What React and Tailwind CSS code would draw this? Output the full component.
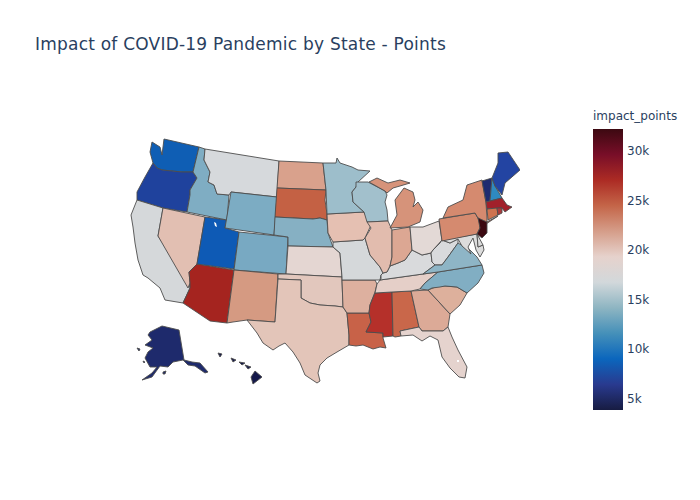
// App.jsx - impact points choropleth
import React from "react";

const states = [
  { id: "WA", fill: "#0f5eb4", pts: "152,142 160,147 162,155 164,139 199,147 193,172 182,172 162,170 157,168 153,163 150,152" },
  { id: "OR", fill: "#1f429d", pts: "153,163 157,168 162,170 182,172 193,172 197,178 190,190 190,195 187,212 163,208 137,200 137,192 145,177" },
  { id: "CA", fill: "#d5d8da", pts: "137,200 163,208 158,236 188,280 190,288 183,303 165,300 160,288 148,278 143,275 138,260 135,243 133,227 131,215 135,205" },
  { id: "NV", fill: "#e2bfb2", pts: "163,208 205,217 197,264 189,272 190,283 188,288 158,236" },
  { id: "AZ", fill: "#a5241f", pts: "197,264 234,270 227,323 210,321 183,303 190,288 190,283 189,272" },
  { id: "UT", fill: "#0e5ab5", pts: "205,217 227,220 225,228 239,232 234,269 197,264" },
  { id: "ID", fill: "#7fadc3", pts: "199,147 205,149 204,160 210,172 208,182 214,185 217,194 229,195 227,220 187,212 190,195 190,190 197,178 193,172" },
  { id: "MT", fill: "#d6d9dc", pts: "205,149 279,161 277,197 231,192 229,195 217,194 214,185 208,182 210,172 204,160" },
  { id: "WY", fill: "#7cacc3", pts: "231,192 277,197 274,235 225,228" },
  { id: "CO", fill: "#78a9c2", pts: "239,232 288,237 286,274 234,270" },
  { id: "NM", fill: "#d59a82", pts: "234,270 278,274 275,322 247,320 233,322 227,323" },
  { id: "ND", fill: "#d9a18c", pts: "279,161 323,163 326,190 277,188" },
  { id: "SD", fill: "#c46144", pts: "277,188 326,190 325,200 327,214 327,220 320,218 313,219 275,217" },
  { id: "NE", fill: "#86b0c3", pts: "275,217 313,219 320,218 327,220 328,233 333,247 288,246 288,237 274,235" },
  { id: "KS", fill: "#e4d6d2", pts: "288,246 333,247 340,253 342,277 286,274" },
  { id: "OK", fill: "#e2c7bd", pts: "278,274 286,274 342,277 342,280 343,307 335,306 320,305 310,303 301,298 301,280 278,279" },
  { id: "TX", fill: "#e3c5b9", pts: "278,279 301,280 301,298 310,303 320,305 335,306 343,307 347,313 349,335 349,345 337,352 327,358 320,365 318,373 320,381 317,383 305,375 300,363 293,352 285,343 279,346 273,350 263,343 257,333 247,320 275,322" },
  { id: "LA", fill: "#c86248", pts: "347,313 369,313 371,322 366,332 383,333 383,338 386,348 380,347 373,349 363,345 356,346 349,345 349,335" },
  { id: "AR", fill: "#ddb09f", pts: "342,280 375,280 377,284 375,292 370,305 369,313 347,313 343,307" },
  { id: "MS", fill: "#b5302a", pts: "375,293 392,292 393,336 383,337 383,333 366,332 371,322 369,313 370,305" },
  { id: "AL", fill: "#c9674a", pts: "392,292 411,291 419,327 400,331 401,336 395,337 393,336" },
  { id: "GA", fill: "#dcaa97", pts: "411,291 428,290 450,314 448,327 443,331 422,331 419,327" },
  { id: "SC", fill: "#ddb09c", pts: "428,290 438,286 445,286 457,287 467,293 460,305 450,314" },
  { id: "FL", fill: "#e5d3ce", pts: "400,331 419,327 422,331 443,331 448,327 452,337 458,350 467,367 465,378 459,377 450,368 442,357 438,340 430,336 422,341 413,335 401,336" },
  { id: "TN", fill: "#e5cfc8", pts: "380,280 423,274 438,272 425,283 420,289 411,291 392,292 375,293 377,284" },
  { id: "NC", fill: "#81aec3", pts: "438,272 482,265 484,273 478,283 467,293 457,287 445,286 440,287 432,288 428,290 420,289 425,283" },
  { id: "MO", fill: "#d5d8da", pts: "333,242 363,240 365,238 370,255 375,261 380,267 383,273 381,275 380,280 375,280 342,280 342,277 340,253 333,247" },
  { id: "KY", fill: "#d9dadc", pts: "381,279 381,275 383,273 387,272 390,266 398,263 405,260 412,250 422,255 431,253 432,262 435,265 423,274 380,280" },
  { id: "IA", fill: "#e5c0b2", pts: "327,214 364,212 371,225 365,238 363,240 333,242 328,233" },
  { id: "MN", fill: "#9dbecb", pts: "323,163 336,163 337,158 340,163 352,167 358,170 370,171 358,182 356,187 352,192 353,202 364,212 327,214 326,190" },
  { id: "WI", fill: "#a2c0cc", pts: "356,182 368,182 385,191 387,195 385,202 387,210 388,221 367,222 364,212 353,202 352,192 356,187" },
  { id: "IL", fill: "#e2bcae", pts: "367,222 388,221 392,230 392,257 390,266 387,272 383,273 380,267 370,255 365,238 371,228" },
  { id: "IN", fill: "#dca793", pts: "392,230 410,227 412,250 405,260 398,263 390,266 392,257" },
  { id: "OH", fill: "#e3d9d6", pts: "410,227 423,227 439,221 442,240 433,250 431,253 422,255 412,250" },
  { id: "MI", fill: "#d6937a", pts: "395,200 404,188 413,192 415,200 413,207 418,202 423,210 420,222 408,227 390,228 397,215" },
  { id: "MIU", fill: "#d6937a", pts: "369,182 377,178 388,183 400,180 410,183 400,186 393,188 387,193 385,191" },
  { id: "WV", fill: "#d9dadc", pts: "442,240 450,243 458,239 458,243 453,250 448,257 442,265 435,265 432,262 431,253 433,250 440,243" },
  { id: "VA", fill: "#8eb5c6", pts: "423,274 435,265 442,265 448,257 453,250 458,243 470,250 477,257 482,265 438,272" },
  { id: "MD", fill: "#dcdcdc", pts: "442,240 477,234 478,247 483,245 484,250 480,257 476,250 473,238 468,247 471,254 462,246 458,239 450,243" },
  { id: "DE", fill: "#dcdcdc", pts: "477,234 483,245 478,247" },
  { id: "PA", fill: "#d58a6f", pts: "439,219 475,213 480,222 480,228 477,234 442,241" },
  { id: "NY", fill: "#d58a6f", pts: "443,218 448,207 463,200 467,185 482,180 486,203 487,218 487,222 498,216 486,224 478,218 475,213" },
  { id: "NJ", fill: "#3c0911", pts: "478,218 487,222 487,233 482,238 477,234 480,228" },
  { id: "VT", fill: "#1f2b70", pts: "482,181 492,178 490,201 486,202" },
  { id: "NH", fill: "#2e8ac0", pts: "492,178 495,186 502,198 490,201" },
  { id: "ME", fill: "#2344a2", pts: "498,153 508,152 520,170 505,183 502,195 495,186 492,178 498,163" },
  { id: "MA", fill: "#a1202b", pts: "486,202 502,198 507,205 512,207 505,212 502,208 487,209" },
  { id: "CT", fill: "#ce7350", pts: "487,209 497,208 498,215 488,220" },
  { id: "RI", fill: "#ac3a3a", pts: "497,208 502,208 502,213 498,215" },
  { id: "AK", fill: "#1e2a6c", pts: "150,332 162,326 179,330 184,360 192,362 200,363 208,372 205,373 195,366 188,365 183,360 173,362 168,367 160,366 152,377 142,380 152,373 157,367 150,367 145,358 148,352 153,348 145,345 152,340 148,335" },
  { id: "AK2", fill: "#1e2a6c", pts: "137,348 140,349 139,351" },
  { id: "AK3", fill: "#1e2a6c", pts: "143,361 145,362 144,363" },
  { id: "AK4", fill: "#1e2a6c", pts: "163,372 166,371 165,374 163,374" },
  { id: "HI1", fill: "#14184a", pts: "218,353 222,354 220,357" },
  { id: "HI2", fill: "#14184a", pts: "231,358 236,360 233,362" },
  { id: "HI3", fill: "#14184a", pts: "239,362 245,363 242,365" },
  { id: "HI4", fill: "#14184a", pts: "245,365 251,367 248,369" },
  { id: "HI5", fill: "#14184a", pts: "255,371 262,377 253,384 251,377" },
];

const ticks = ["30k", "25k", "20k", "15k", "10k", "5k"];

export default function App() {
  return (
    <div className="w-[700px] h-[500px] bg-white flex flex-col font-['DejaVu_Sans',sans-serif] text-[#2a3f5f]">
      <div className="pl-[35px] pt-[32px] text-[17px] leading-[24px] tracking-[0.22px]">
        Impact of COVID-19 Pandemic by State - Points
      </div>

      <div className="flex pl-[120px] pt-[52px]">
        {/* map */}
        <svg viewBox="120 130 400 265" className="w-[400px] h-[265px] mt-[22px] shrink-0">
          {states.map((s) => (
            <polygon key={s.id} points={s.pts} fill={s.fill} stroke="#4d4d4d" strokeWidth="0.9" strokeLinejoin="round" />
          ))}
          <polygon points="214,222 216,223 217,227 215,226" fill="#fff" />
          <polygon points="457,360 459,360 459,362 457,362" fill="#fff" />
        </svg>

        {/* colorbar */}
        <div className="ml-[73px] flex flex-col">
          <div className="text-[12px] leading-[16px] h-[21px] whitespace-nowrap">impact_points</div>
          <div className="flex">
            <div className="w-[30px] h-[281px] bg-[linear-gradient(to_top,#171c42,#293a8f,#0b66bd,#4590b9,#8eb5c2,#d2d8db,#e6d2cc,#d59d89,#c46548,#ac2b24,#780e28,#3c0911)]" />
            <div className="flex flex-col gap-[29.5px] pt-[12px] pl-[4px]">
              {ticks.map((t) => (
                <span key={t} className="text-[12px] leading-[20px]">{t}</span>
              ))}
            </div>
          </div>
        </div>
      </div>
    </div>
  );
}
